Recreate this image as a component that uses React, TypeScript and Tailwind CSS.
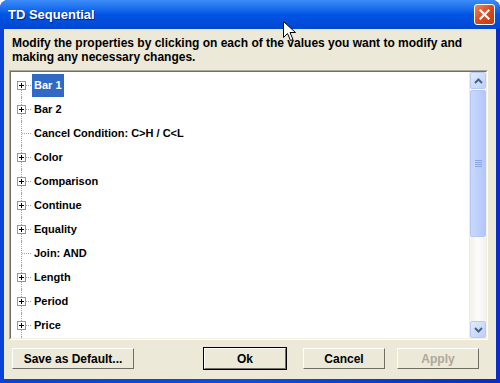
import React from 'react';

const ITEMS: { label: string; expandable: boolean }[] = [
  { label: 'Bar 1', expandable: true },
  { label: 'Bar 2', expandable: true },
  { label: 'Cancel Condition: C>H / C<L', expandable: false },
  { label: 'Color', expandable: true },
  { label: 'Comparison', expandable: true },
  { label: 'Continue', expandable: true },
  { label: 'Equality', expandable: true },
  { label: 'Join: AND', expandable: false },
  { label: 'Length', expandable: true },
  { label: 'Period', expandable: true },
  { label: 'Price', expandable: true },
];

function PlusBox() {
  return (
    <div className="relative w-[9px] h-[9px] border border-[#7f9db9] bg-white z-10">
      <div className="absolute left-[1px] top-[3px] w-[5px] h-[1px] bg-black" />
      <div className="absolute left-[3px] top-[1px] w-[1px] h-[5px] bg-black" />
    </div>
  );
}

function TreeRow({ label, expandable, selected, first }: { label: string; expandable: boolean; selected: boolean; first: boolean }) {
  return (
    <div className="relative h-6 flex items-center">
      {/* vertical tree line */}
      <div className={`absolute left-[10px] w-0 border-l border-dotted border-[#a0a0a0] ${first ? 'top-3 bottom-0' : 'top-0 bottom-0'}`} />
      <div className="w-[9px] ml-[6px] flex items-center justify-center shrink-0">
        {expandable ? <PlusBox /> : null}
      </div>
      {expandable ? (
        <div className="w-[5px] h-0 border-t border-dotted border-[#a0a0a0]" />
      ) : (
        <div className="w-[9px] -ml-[4px] h-0 border-t border-dotted border-[#a0a0a0]" />
      )}
      <span
        className={`ml-[1px] px-[2px] h-[23px] flex items-center leading-none ${selected ? 'bg-[#316ac5] text-white' : 'text-black'}`}
      >
        {label}
      </span>
    </div>
  );
}

function XpButton({ children, isDefault, disabled, className }: { children: React.ReactNode; isDefault?: boolean; disabled?: boolean; className?: string }) {
  return (
    <div className={`${isDefault ? 'border border-black' : 'border border-transparent'} ${className ?? ''}`}>
      <div className="h-[21px] border-t border-l border-white border-b border-r border-b-[#716f64] border-r-[#716f64] bg-[#ece9d8] flex items-center justify-center">
        <span className={disabled ? 'text-[#aca899]' : 'text-black'}>{children}</span>
      </div>
    </div>
  );
}

function Cursor() {
  return (
    <svg className="absolute left-[283px] top-[21px]" width="14" height="22" viewBox="0 0 14 22">
      <path
        d="M0.5 0.5 L0.5 16.5 L4.5 12.5 L7.5 19.5 L10 18.5 L7 11.5 L12.5 11.5 Z"
        fill="white"
        stroke="black"
        strokeWidth="1"
      />
    </svg>
  );
}

export default function App() {
  return (
    <div className="w-[500px] h-[383px] bg-white relative" style={{ fontFamily: '"Liberation Sans", Arial, sans-serif' }}>
      <div className="w-full h-full flex flex-col rounded-t-[8px] overflow-hidden bg-gradient-to-r from-[#0842d8] via-[#0a4ee0] to-[#0a2cc4]">
        {/* Title bar */}
        <div className="h-[29px] shrink-0 flex items-center justify-between pl-[8px] pr-[5px] bg-gradient-to-b from-[#3c8cf8] via-[#0055e5] to-[#0047d0]">
          <span className="text-white font-bold text-[13px]" style={{ textShadow: '1px 1px 0 #0a1e8c' }}>
            TD Sequential
          </span>
          <div className="w-[21px] h-[21px] rounded-[3px] border border-white bg-gradient-to-br from-[#e8846a] via-[#d9491f] to-[#c03d12] flex items-center justify-center">
            <svg width="11" height="11" viewBox="0 0 11 11">
              <path d="M1.5 1.5 L9.5 9.5 M9.5 1.5 L1.5 9.5" stroke="white" strokeWidth="2.2" strokeLinecap="square" />
            </svg>
          </div>
        </div>

        {/* Client area */}
        <div className="flex-1 mx-[4px] mb-[4px] bg-[#ece9d8] flex flex-col text-[11px] font-bold">
          <p className="pt-[7px] pl-[8px] pr-1 leading-[14px] text-[12px] text-black whitespace-nowrap">
            Modify the properties by clicking on each of the values you want to modify and
            <br />
            making any necessary changes.
          </p>

          {/* Tree list */}
          <div className="mt-[6px] ml-[5px] mr-[8px] h-[270px] border border-t-[#aca899] border-l-[#aca899] border-b-white border-r-white">
            <div className="h-full border border-t-[#716f64] border-l-[#716f64] border-b-[#f1efe2] border-r-[#f1efe2] bg-white flex">
              <div className="flex-1 overflow-hidden pt-[1px]">
                {ITEMS.map((it, i) => (
                  <TreeRow key={it.label} label={it.label} expandable={it.expandable} selected={i === 0} first={i === 0} />
                ))}
                <div className="relative h-6">
                  <div className="absolute left-[10px] top-0 bottom-0 border-l border-dotted border-[#a0a0a0]" />
                </div>
              </div>

              {/* Scrollbar */}
              <div className="w-[17px] shrink-0 flex flex-col bg-[#f7f6f0] border-l border-[#eeede5]">
                <div className="h-[17px] shrink-0 rounded-[2px] border border-[#b7cbf6] bg-gradient-to-br from-[#e2ebfe] to-[#bccffa] flex items-center justify-center">
                  <svg width="9" height="6" viewBox="0 0 9 6">
                    <path d="M1 5 L4.5 1.5 L8 5" fill="none" stroke="#4d6185" strokeWidth="2" />
                  </svg>
                </div>
                <div className="mt-[1px] h-[147px] shrink-0 rounded-[2px] border border-[#b4c8f6] bg-gradient-to-r from-[#c9d8fc] via-[#bed0fb] to-[#b3c7f7] flex items-center justify-center">
                  <div className="flex flex-col gap-[1px]">
                    <div className="w-[7px] h-[1px] bg-[#8aa4e8]" />
                    <div className="w-[7px] h-[1px] bg-[#8aa4e8]" />
                    <div className="w-[7px] h-[1px] bg-[#8aa4e8]" />
                    <div className="w-[7px] h-[1px] bg-[#8aa4e8]" />
                  </div>
                </div>
                <div className="flex-1 bg-gradient-to-r from-[#f3f1ec] via-[#fcfcfa] to-[#f3f1ec]" />
                <div className="h-[17px] shrink-0 rounded-[2px] border border-[#b7cbf6] bg-gradient-to-br from-[#e2ebfe] to-[#bccffa] flex items-center justify-center">
                  <svg width="9" height="6" viewBox="0 0 9 6">
                    <path d="M1 1 L4.5 4.5 L8 1" fill="none" stroke="#4d6185" strokeWidth="2" />
                  </svg>
                </div>
              </div>
            </div>
          </div>

          {/* Buttons */}
          <div className="mt-[7px] flex items-start text-[12px]">
            <XpButton className="ml-[7px] w-[124px]">Save as Default...</XpButton>
            <XpButton isDefault className="ml-[68px] w-[84px]">Ok</XpButton>
            <XpButton className="ml-[15px] w-[84px]">Cancel</XpButton>
            <XpButton disabled className="ml-[10px] w-[84px]">Apply</XpButton>
          </div>
        </div>
      </div>
      <Cursor />
    </div>
  );
}
